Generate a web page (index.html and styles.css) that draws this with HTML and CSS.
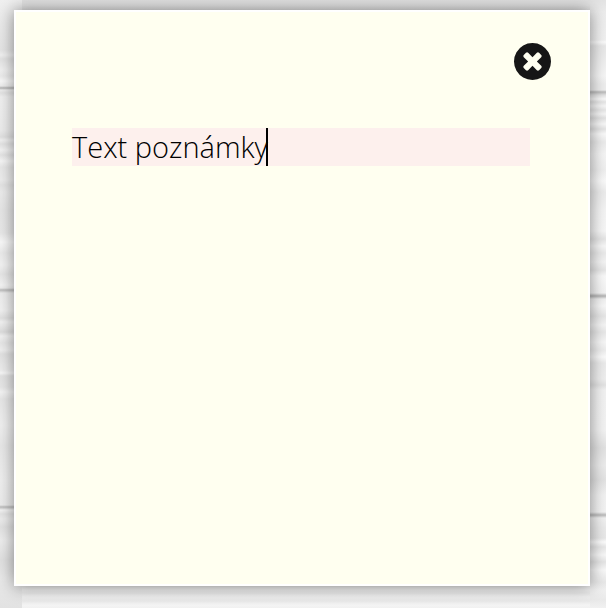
FILE: index.html
```html
<!DOCTYPE html>
<html lang="cs">
<head>
<meta charset="utf-8">
<title>Poznámka</title>
<link rel="stylesheet" href="styles.css">
</head>
<body>
<article class="note">
  <header class="note-header">
    <button class="close" type="button" aria-label="Zavřít">
      <svg viewBox="128 128 1536 1536" width="37" height="37"><path d="M1277 1122q0-26-19-45L1077 896l181-181q19-19 19-45 0-27-19-46l-90-90q-19-19-46-19-26 0-45 19L896 715 715 534q-19-19-45-19-27 0-46 19l-90 90q-19 19-19 46 0 26 19 45l181 181-181 181q-19 19-19 45 0 27 19 46l90 90q19 19 46 19 26 0 45-19l181-181 181 181q19 19 45 19 27 0 46-19l90-90q19-19 19-46zm387-226q0 209-103 385.500T1281.500 1561 896 1664t-385.500-103T231 1281.500 128 896t103-385.500T510.500 231 896 128t385.500 103T1561 510.500 1664 896z"/></svg>
    </button>
  </header>
  <div class="note-text"><span>Text poznámky</span><i class="caret"></i></div>
</article>
</body>
</html>
```
FILE: styles.css
```css
* {
  box-sizing: border-box;
}

body {
  margin: 0;
  height: 608px;
  padding: 10px 16px 22px 14px;
  overflow: hidden;
  background-color: #eaeaea;
  /* wooden planks: left board, right board, then the top and bottom boards */
  background-image:
    linear-gradient(#f0f0f0 0, #eaeaea 30px, #e6e6e6 50px, #f2f2f2 55px, #e4e4e4 59px, #f2f2f2 70px, #ececec 76px, #fafafa 81px, #eee 86px, #b4b4b4 88px, #eee 90px, #e4e4e4 93px, #f1f1f1 97px, #ededed 130px, #e2e2e2 137px, #f2f2f2 140px, #e4e4e4 144px, #f4f4f4 150px, #e5e5e5 155px, #f7f7f7 161px, #e9e9e9 167px, #eee 180px, #e5e5e5 185px, #ededed 192px, #e7e7e7 210px, #e9e9e9 233px, #fafafa 242px, #ececec 253px, #f4f4f4 265px, #e7e7e7 274px, #f5f5f5 285px, #eee 288px, #bcbcbc 290px, #eee 293px, #f3f3f3 310px, #e2e2e2 318px, #f3f3f3 322px, #dedede 332px, #f3f3f3 336px, #e8e8e8 343px, #f1f1f1 350px, #e3e3e3 354px, #eee 370px, #f8f8f8 373px, #e4e4e4 376px, #e8e8e8 387px, #f5f5f5 392px, #e8e8e8 399px, #f1f1f1 425px, #e9e9e9 446px, #f0f0f0 480px, #ededed 505px, #bdbdbd 507px, #f5f5f5 510px, #e5e5e5 514px, #eee 519px, #e3e3e3 527px, #efefef 540px, #e2e2e2 560px, #e9e9e9 578px, #e2e2e2 608px),
    linear-gradient(#e3e3e3 0, #ededed 12px, #f1f1f1 40px, #fbfbfb 42px, #e8e8e8 46px, #eee 60px, #f6f6f6 76px, #eee 84px, #eee 90px, #bababa 92px, #e2e2e2 95px, #fafafa 99px, #e5e5e5 102px, #f7f7f7 106px, #e6e6e6 110px, #f6f6f6 114px, #e2e2e2 118px, #f8f8f8 124px, #e4e4e4 129px, #fafafa 134px, #ebebeb 142px, #f5f5f5 154px, #efefef 170px, #fafafa 181px, #ececec 192px, #f4f4f4 210px, #f7f7f7 231px, #e5e5e5 239px, #f8f8f8 246px, #eaeaea 253px, #f4f4f4 262px, #e6e6e6 270px, #fafafa 276px, #f3f3f3 293px, #b2b2b2 296px, #f0f0f0 299px, #f8f8f8 306px, #e6e6e6 316px, #f5f5f5 325px, #e8e8e8 332px, #f7f7f7 342px, #ededed 350px, #fcfcfc 357px, #ebebeb 363px, #efefef 379px, #e3e3e3 385px, #f2f2f2 390px, #f3f3f3 430px, #e2e2e2 448px, #ececec 465px, #e3e3e3 480px, #f2f2f2 495px, #f3f3f3 512px, #b9b9b9 515px, #f1f1f1 518px, #eaeaea 528px, #e8e8e8 538px, #fcfcfc 542px, #e7e7e7 547px, #f8f8f8 555px, #e5e5e5 562px, #f9f9f9 570px, #e8e8e8 582px, #f0f0f0 590px, #e9e9e9 600px, #f1f1f1 608px),
    linear-gradient(#e2e2e2 0, #e6e6e6 5px, #e2e2e2 10px, #e8e8e8 586px, #f0f0f0 590px, #e8e8e8 593px, #efefef 597px, #e9e9e9 601px, #f4f4f4 605px, #f1f1f1 608px);
  background-size: 22px 608px, 16px 608px, 100% 608px;
  background-position: left top, right top, left top;
  background-repeat: no-repeat;
}

.note {
  height: 576px;
  padding: 31px 58px 0 56px;
  border: 2px solid #fff;
  background: #fffff0;
  box-shadow: 0 0 16px rgba(0, 0, 0, 0.45);
}

.note-header {
  display: flex;
  justify-content: flex-end;
  height: 85px;
  margin-right: -20.7px;
}

.close {
  width: 37px;
  height: 37px;
  padding: 0;
  border: 0;
  background: none;
  fill: #161616;
}

.close svg {
  display: block;
}

.note-text {
  display: flex;
  height: 38px;
  background: #fdf0ed;
  color: #000;
  font: 300 29px/38px "Open Sans", sans-serif;
  white-space: nowrap;
}

.caret {
  width: 2px;
  margin-left: -2px;
  background: #000;
}
```
